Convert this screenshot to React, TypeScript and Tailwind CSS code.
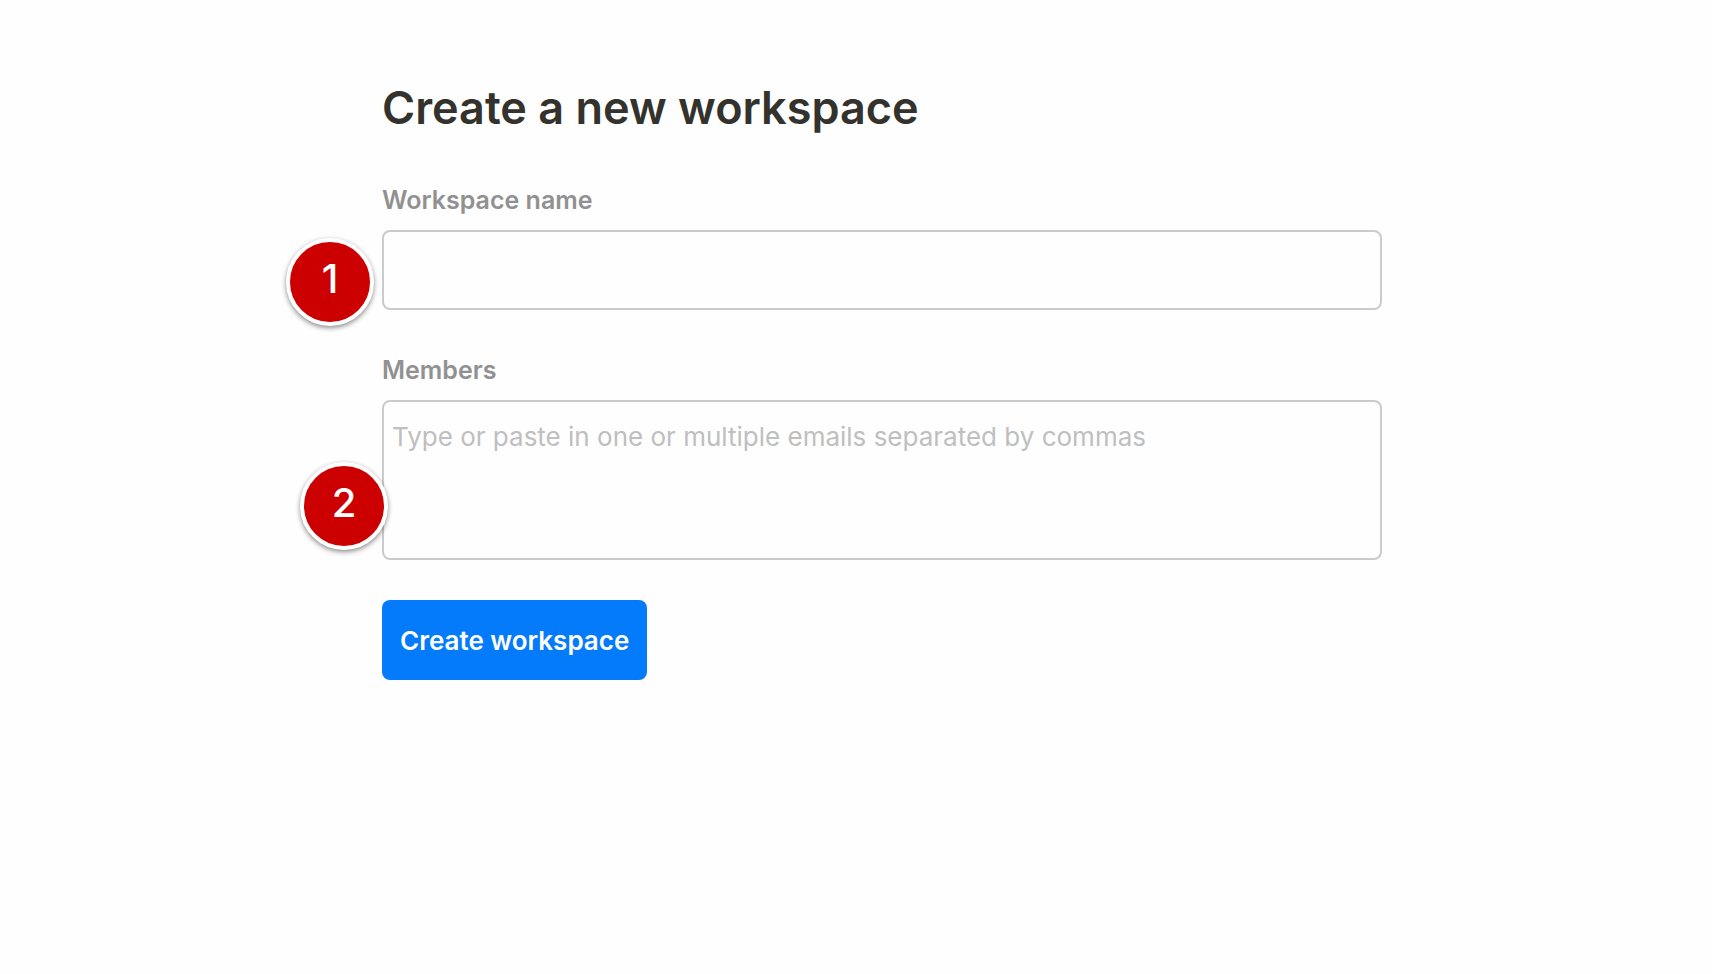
import type { ReactNode } from "react";

function StepBadge({ step, className }: { step: number; className: string }) {
  return (
    <span
      className={`absolute flex h-[88px] w-[88px] items-center justify-center rounded-full border-4 border-white bg-[#cc0000] pb-1.5 text-[40px] leading-none font-medium text-white shadow-[0_2px_5px_rgba(0,0,0,0.45)] ${className}`}
    >
      {step}
    </span>
  );
}

function Field({ id, label, children }: { id: string; label: string; children: ReactNode }) {
  return (
    <div>
      <label htmlFor={id} className="block text-[25px] leading-[32px] font-semibold text-[#919191]">
        {label}
      </label>
      <div className="relative mt-[14px]">{children}</div>
    </div>
  );
}

export default function App() {
  return (
    <main className="min-h-screen bg-[#fefefe] pt-20 pr-8 pl-[84px] font-['Inter',sans-serif]">
      <form className="mx-auto max-w-[1000px]" onSubmit={(e) => e.preventDefault()}>
        <h1 className="text-[45px] leading-[56px] font-semibold text-[#33322c]">Create a new workspace</h1>

        <div className="mt-12 flex flex-col gap-11">
          <Field id="workspace-name" label="Workspace name">
            <input
              id="workspace-name"
              type="text"
              className="block h-20 w-full rounded-lg border-2 border-[#cbcbcb] px-2 text-[26px] outline-none"
            />
            <StepBadge step={1} className="top-2 -left-24" />
          </Field>

          <Field id="members" label="Members">
            <textarea
              id="members"
              placeholder="Type or paste in one or multiple emails separated by commas"
              className="block h-40 w-full resize-none rounded-lg border-2 border-[#cbcbcb] px-2 py-[18px] text-[26px] leading-[34px] outline-none placeholder:text-[#bfbfbf]"
            />
            <StepBadge step={2} className="top-[62px] -left-[82px]" />
          </Field>
        </div>

        <button
          type="submit"
          className="mt-10 h-20 rounded-lg bg-[#047bfb] px-[18px] pt-0.5 text-[26px] leading-[34px] font-semibold text-white"
        >
          Create workspace
        </button>
      </form>
    </main>
  );
}
